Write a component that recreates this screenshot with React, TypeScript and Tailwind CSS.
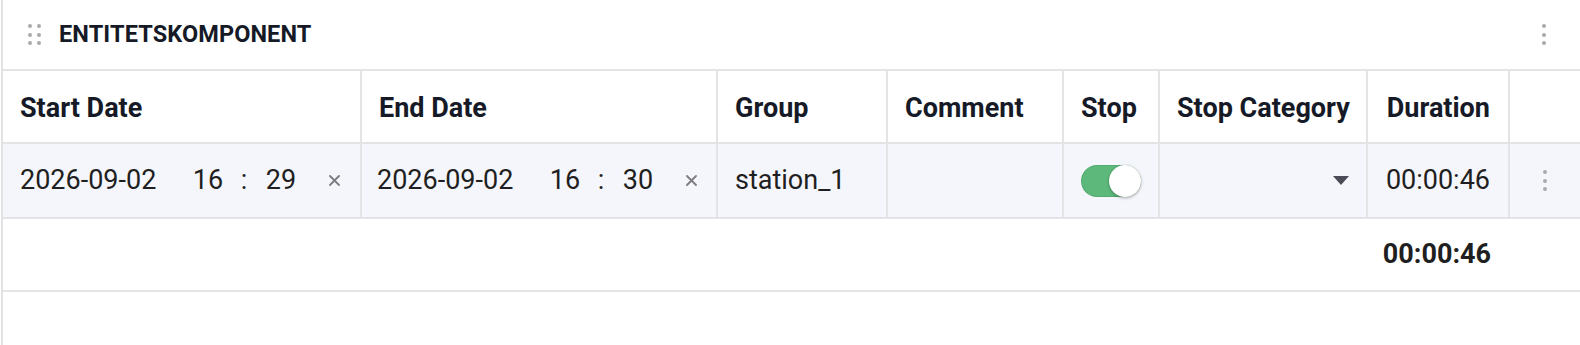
import React from 'react';

const cols = 'grid grid-cols-[359px_356px_170px_176px_96px_208px_142px_1fr]';

function Dots({ className = '' }: { className?: string }) {
  return (
    <div className={`flex flex-col gap-[4.5px] ${className}`}>
      <span className="w-1 h-1 rounded-full bg-[#a9a9ae]" />
      <span className="w-1 h-1 rounded-full bg-[#a9a9ae]" />
      <span className="w-1 h-1 rounded-full bg-[#a9a9ae]" />
    </div>
  );
}

function DragHandle() {
  return (
    <div className="grid grid-cols-2 gap-x-[5px] gap-y-[4.5px]">
      {[0, 1, 2, 3, 4, 5].map((i) => (
        <span key={i} className="w-1 h-1 rounded-full bg-[#ababaf]" />
      ))}
    </div>
  );
}

function ClearIcon() {
  return (
    <svg width="11" height="11" viewBox="0 0 11 11" className="inline-block">
      <path d="M1 1l9 9M10 1l-9 9" stroke="#7c7c80" strokeWidth="1.8" strokeLinecap="round" />
    </svg>
  );
}

function DateTimeInput({ date, hour, minute }: { date: string; hour: string; minute: string }) {
  return (
    <div className="flex items-center h-full">
      <span className="w-[160px]">{date}</span>
      <span className="w-[56px] text-center">{hour}</span>
      <span className="w-[16px] text-center">:</span>
      <span className="w-[58px] text-center">{minute}</span>
      <span className="w-[48px] flex justify-center">
        <ClearIcon />
      </span>
    </div>
  );
}

function Toggle() {
  return (
    <div className="relative w-[66px] h-[32px] rounded-full bg-[#5cb97b] shadow-[inset_0_0_0_1px_rgba(0,0,0,0.08)]">
      <span className="absolute right-0 top-0 w-[32px] h-[32px] rounded-full bg-white shadow-[0_1px_3px_rgba(0,0,0,0.35)]" />
    </div>
  );
}

const headCell = 'flex items-center whitespace-nowrap pt-[3px] px-[17px] border-r-2 border-[#e4e4e6]';
const bodyCell = 'flex items-center whitespace-nowrap px-[17px] border-r-2 border-[#e4e4e6]';

export default function App() {
  return (
    <div className="h-[345px] w-full overflow-hidden bg-white flex" style={{ fontFamily: 'Roboto, "Liberation Sans", sans-serif' }}>
      <div className="w-px shrink-0" />
      <div className="w-[2px] shrink-0 bg-[#e2e2e5]" />
      <div className="w-[1585px] shrink-0 self-start border-r-2 border-b-2 border-[#e4e4e6] rounded-br-md">
        {/* title bar */}
        <div className="h-[71px] flex items-center pl-[25px] border-b-2 border-[#e4e4e6]">
          <DragHandle />
          <span className="ml-[18px] text-[23.5px] font-bold text-[#161a27] tracking-[0.1px]">ENTITETSKOMPONENT</span>
          <div className="flex-1" />
          <div className="w-[70px] mr-[7px] flex justify-center">
            <Dots />
          </div>
        </div>

        {/* table head */}
        <div className={`${cols} h-[73px] border-b-2 border-[#e4e4e6] text-[27px] font-bold text-[#161a27]`}>
          <div className={headCell}>Start Date</div>
          <div className={headCell}>End Date</div>
          <div className={headCell}>Group</div>
          <div className={headCell}>Comment</div>
          <div className={headCell}>Stop</div>
          <div className={headCell}>Stop Category</div>
          <div className={`${headCell} justify-end pr-[18px]`}>Duration</div>
          <div />
        </div>

        {/* data row */}
        <div className={`${cols} h-[75px] border-b-2 border-[#e4e4e6] bg-[#f5f6fb] text-[27px] text-[#1f1f22]`}>
          <div className={`${bodyCell} pr-0`}>
            <DateTimeInput date="2026-09-02" hour="16" minute="29" />
          </div>
          <div className={`${bodyCell} pl-[15px] pr-0`}>
            <DateTimeInput date="2026-09-02" hour="16" minute="30" />
          </div>
          <div className={bodyCell}>station_1</div>
          <div className={bodyCell} />
          <div className={`${bodyCell} justify-center px-0`}>
            <Toggle />
          </div>
          <div className={`${bodyCell} justify-end`}>
            <svg width="16" height="9" viewBox="0 0 16 9">
              <path d="M0 0h16L8 9z" fill="#4b4b57" />
            </svg>
          </div>
          <div className={`${bodyCell} justify-end pr-[18px]`}>00:00:46</div>
          <div className="flex items-center pl-[33px]">
            <Dots />
          </div>
        </div>

        {/* footer */}
        <div className={`${cols} h-[71px] text-[27px] font-bold text-[#1f1f22]`}>
          <div className="col-span-6" />
          <div className="flex items-center justify-end pr-[19px]">00:00:46</div>
          <div />
        </div>
      </div>
    </div>
  );
}
